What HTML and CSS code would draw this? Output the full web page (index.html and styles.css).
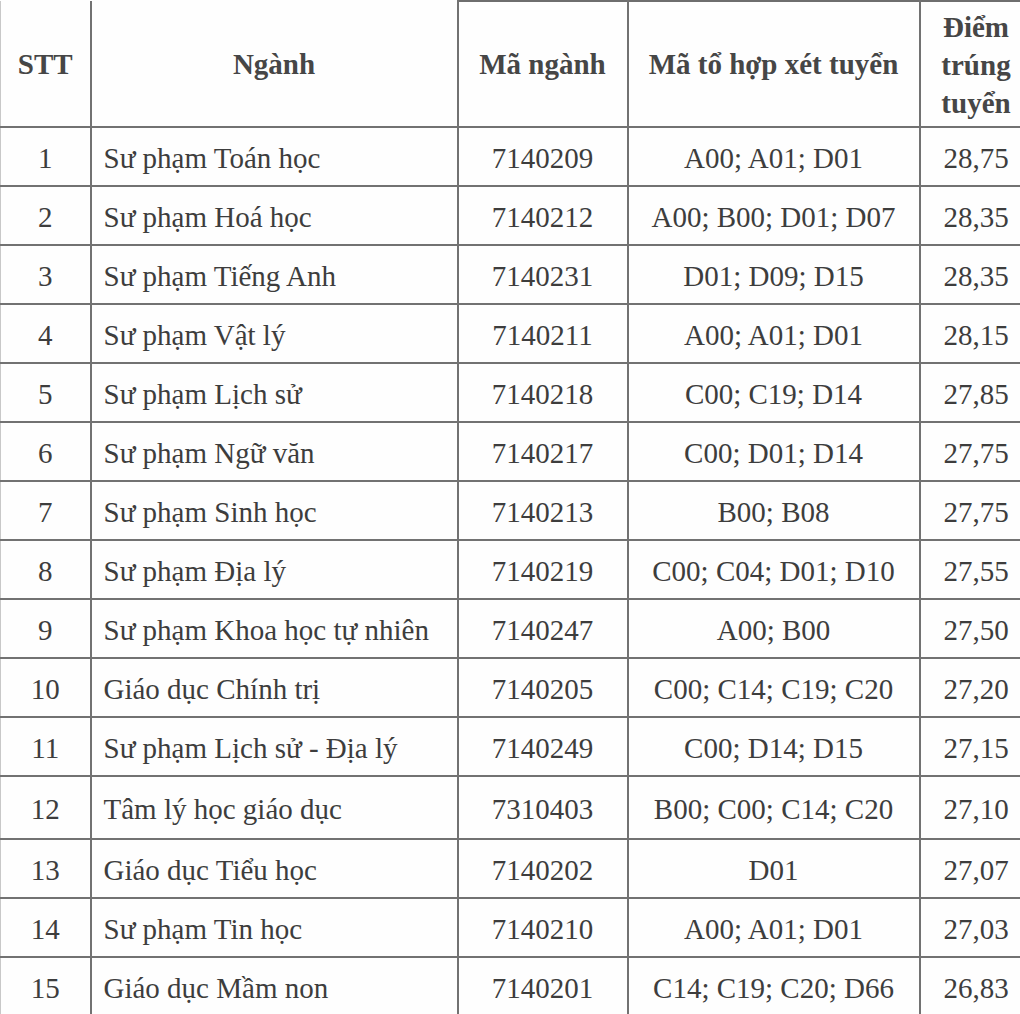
FILE: index.html
```html
<!DOCTYPE html>
<html lang="vi">
<head>
<meta charset="utf-8">
<title>Điểm trúng tuyển</title>
<link rel="stylesheet" href="styles.css">
</head>
<body>
<table class="scores">
  <colgroup>
    <col class="c-stt">
    <col class="c-nganh">
    <col class="c-ma">
    <col class="c-tohop">
    <col class="c-diem">
  </colgroup>
  <thead>
    <tr class="head">
      <th>STT</th>
      <th>Ngành</th>
      <th class="top">Mã ngành</th>
      <th class="top">Mã tổ hợp xét tuyển</th>
      <th class="top diem-head">Điểm<br>trúng<br>tuyển</th>
    </tr>
  </thead>
  <tbody>
    <tr><td>1</td><td class="name">Sư phạm Toán học</td><td>7140209</td><td>A00; A01; D01</td><td>28,75</td></tr>
    <tr><td>2</td><td class="name">Sư phạm Hoá học</td><td>7140212</td><td>A00; B00; D01; D07</td><td>28,35</td></tr>
    <tr><td>3</td><td class="name">Sư phạm Tiếng Anh</td><td>7140231</td><td>D01; D09; D15</td><td>28,35</td></tr>
    <tr><td>4</td><td class="name">Sư phạm Vật lý</td><td>7140211</td><td>A00; A01; D01</td><td>28,15</td></tr>
    <tr><td>5</td><td class="name">Sư phạm Lịch sử</td><td>7140218</td><td>C00; C19; D14</td><td>27,85</td></tr>
    <tr><td>6</td><td class="name">Sư phạm Ngữ văn</td><td>7140217</td><td>C00; D01; D14</td><td>27,75</td></tr>
    <tr><td>7</td><td class="name">Sư phạm Sinh học</td><td>7140213</td><td>B00; B08</td><td>27,75</td></tr>
    <tr><td>8</td><td class="name">Sư phạm Địa lý</td><td>7140219</td><td>C00; C04; D01; D10</td><td>27,55</td></tr>
    <tr><td>9</td><td class="name">Sư phạm Khoa học tự nhiên</td><td>7140247</td><td>A00; B00</td><td>27,50</td></tr>
    <tr><td>10</td><td class="name">Giáo dục Chính trị</td><td>7140205</td><td>C00; C14; C19; C20</td><td>27,20</td></tr>
    <tr><td>11</td><td class="name">Sư phạm Lịch sử - Địa lý</td><td>7140249</td><td>C00; D14; D15</td><td>27,15</td></tr>
    <tr class="tall"><td>12</td><td class="name">Tâm lý học giáo dục</td><td>7310403</td><td>B00; C00; C14; C20</td><td>27,10</td></tr>
    <tr><td>13</td><td class="name">Giáo dục Tiểu học</td><td>7140202</td><td>D01</td><td>27,07</td></tr>
    <tr><td>14</td><td class="name">Sư phạm Tin học</td><td>7140210</td><td>A00; A01; D01</td><td>27,03</td></tr>
    <tr><td>15</td><td class="name">Giáo dục Mầm non</td><td>7140201</td><td>C14; C19; C20; D66</td><td>26,83</td></tr>
  </tbody>
</table>
</body>
</html>
```
FILE: styles.css
```css
html, body {
  margin: 0;
  padding: 0;
  background: #fefefe;
  overflow: hidden;
}

body {
  width: 1020px;
  height: 1014px;
  font-family: "Liberation Serif", "Times New Roman", serif;
  color: #3d3d3d;
}

.scores {
  border-collapse: collapse;
  table-layout: fixed;
  width: 1031px;
  font-size: 29px;
}

.c-stt { width: 90px; }
.c-nganh { width: 367px; }
.c-ma { width: 170px; }
.c-tohop { width: 292px; }
.c-diem { width: 112px; }

.scores th,
.scores td {
  border: 2px solid #727272;
  padding: 0;
  text-align: center;
  vertical-align: middle;
  white-space: nowrap;
}

.scores tr > :first-child {
  border-left: 1px solid #c8c8c8;
}

.scores tr > :last-child {
  border-right: none;
}

.head th {
  height: 122px;
  border-top: none;
  font-weight: bold;
  color: #464646;
  line-height: 32px;
}

.head th.top {
  border-top: 2px solid #6e6e6e;
}

.head .diem-head {
  line-height: 38px;
  padding-top: 2px;
}

.scores tbody tr {
  height: 59px;
}

.scores tbody tr.tall {
  height: 63px;
}

.scores td {
  line-height: 32px;
  padding-top: 2px;
}

.scores td.name {
  text-align: left;
  padding-left: 12px;
}
```
